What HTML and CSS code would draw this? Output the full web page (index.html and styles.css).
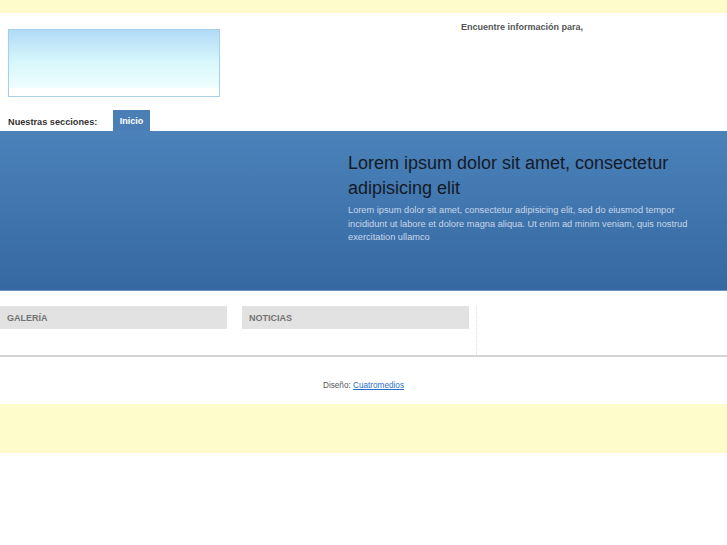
FILE: index.html
```html
<!DOCTYPE html>
<html lang="es">
<head>
<meta charset="utf-8">
<title>Inicio</title>
<link rel="stylesheet" href="styles.css">
</head>
<body>
<div class="topbar"></div>
<div class="header">
  <div class="logo"><div class="logo-fill"></div></div>
  <div class="finder">Encuentre información para,</div>
</div>
<div class="nav">
  <span class="nav-label">Nuestras secciones:</span>
  <a class="tab" href="#">Inicio</a>
</div>
<div class="banner">
  <div class="banner-text">
    <h1>Lorem ipsum dolor sit amet, consectetur adipisicing elit</h1>
    <p>Lorem ipsum dolor sit amet, consectetur adipisicing elit, sed do eiusmod tempor incididunt ut labore et dolore magna aliqua. Ut enim ad minim veniam, quis nostrud exercitation ullamco</p>
  </div>
</div>
<div class="columns">
  <div class="col"><div class="col-title">GALERÍA</div></div>
  <div class="col"><div class="col-title">NOTICIAS</div></div>
  <div class="col-side"></div>
</div>
<div class="footer">Diseño: <a href="#">Cuatromedios</a></div>
<div class="bottombar"></div>
</body>
</html>
```
FILE: styles.css
```css
html, body {
  margin: 0;
  padding: 0;
  background: #fff;
  font-family: "Liberation Sans", Arial, sans-serif;
}
.topbar {
  height: 13px;
  background: #fffccc;
}
.header {
  height: 97px;
  display: flex;
  align-items: flex-start;
}
.logo {
  margin: 16px 0 0 8px;
  width: 210px;
  height: 66px;
  border: 1px solid #a6cfe9;
  background: #fff;
}
.logo-fill {
  height: 58px;
  background: linear-gradient(#b0daf6, #d7f7fb 55%, #effefe);
}
.finder {
  margin: 9px 0 0 241px;
  font-size: 9px;
  font-weight: bold;
  color: #555;
}
.nav {
  height: 21px;
  display: flex;
  align-items: stretch;
}
.nav-label {
  margin-left: 8px;
  width: 105px;
  font-size: 9.2px;
  font-weight: bold;
  color: #333;
  line-height: 24px;
}
.tab {
  width: 37px;
  background: #4a7fb6;
  color: #fff;
  font-size: 9px;
  font-weight: bold;
  text-decoration: none;
  text-align: center;
  line-height: 23px;
}
.banner {
  height: 159px;
  background: linear-gradient(#4b82ba, #3668a1);
  border-bottom: 1px solid #6c94c2;
  display: flex;
  justify-content: flex-end;
}
.banner-text {
  padding-top: 20px;
  padding-right: 29px;
  box-sizing: border-box;
  width: 379px;
}
.banner h1 {
  margin: 0;
  font-size: 18px;
  font-weight: normal;
  line-height: 25px;
  color: #141a26;
}
.banner p {
  margin: 3px 0 0;
  font-size: 9.25px;
  line-height: 13.5px;
  color: #c7d7ea;
}
.columns {
  display: flex;
  padding-top: 15px;
  height: 49px;
  border-bottom: 2px solid #d4d4d4;
}
.col {
  width: 227px;
  margin-right: 15px;
}
.col-title {
  height: 23px;
  line-height: 25px;
  background: #e2e2e2;
  color: #727272;
  font-size: 9px;
  font-weight: bold;
  padding-left: 7px;
}
.col-side {
  margin-left: -8px;
  border-left: 1px dotted #e0e0e0;
  flex: 1;
}
.footer {
  height: 47px;
  text-align: center;
  font-size: 8.2px;
  color: #555;
  line-height: 1;
  padding-top: 25px;
  box-sizing: border-box;
}
.footer a {
  color: #2a6fc9;
}
.bottombar {
  height: 49px;
  background: #fffccc;
}
```
